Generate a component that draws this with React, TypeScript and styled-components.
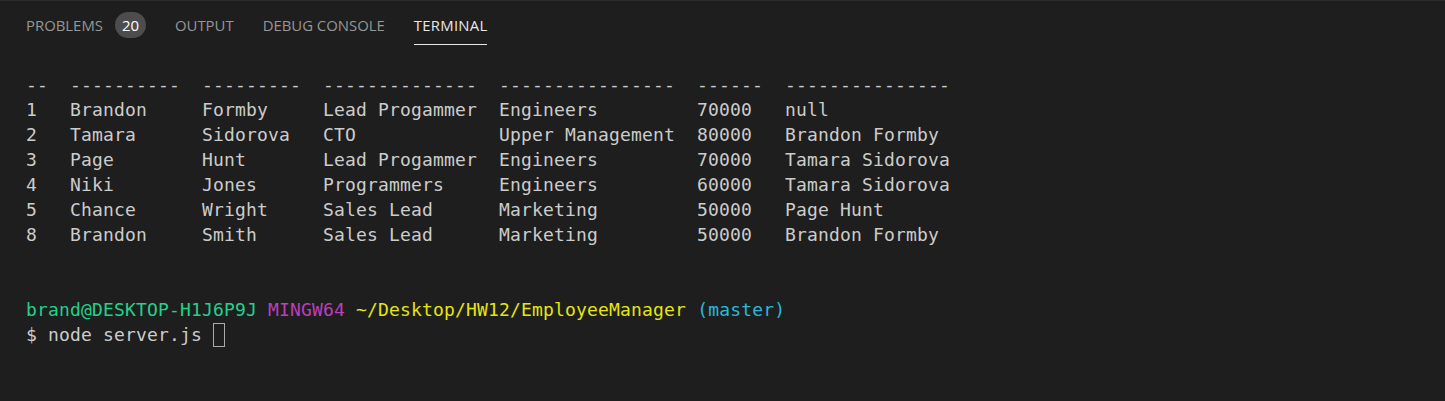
import React from "react";
import styled, { createGlobalStyle } from "styled-components";

const GlobalStyle = createGlobalStyle`
  html, body { margin: 0; padding: 0; background: #1e1e1e; }
  #root { width: 1445px; height: 401px; overflow: hidden; }
`;

const Panel = styled.div`
  width: 1445px;
  height: 401px;
  background: #1e1e1e;
  border-top: 1px solid #2b2b2b;
  box-sizing: border-box;
  display: flex;
  flex-direction: column;
`;

const TabBar = styled.div`
  display: flex;
  align-items: flex-start;
  gap: 29px;
  padding: 0 0 0 26px;
  height: 45px;
  box-sizing: border-box;
`;

const Tab = styled.div<{ $active?: boolean }>`
  display: flex;
  align-items: center;
  height: 44px;
  box-sizing: border-box;
  font-family: "Open Sans", "Noto Sans", sans-serif;
  font-size: 14.9px;
  letter-spacing: ${(p) => (p.$active ? "0.25px" : "0")};
  color: ${(p) => (p.$active ? "#e7e7e7" : "#969696")};
  border-bottom: 1px solid ${(p) => (p.$active ? "#e7e7e7" : "transparent")};
  padding-top: 5px;
`;

const Badge = styled.span`
  display: inline-flex;
  align-items: center;
  justify-content: center;
  margin-left: 12px;
  width: 31px;
  height: 26px;
  border-radius: 13px;
  background: #4d4d4d;
  color: #ffffff;
  font-size: 15px;
  font-weight: 400;
`;

const Terminal = styled.div`
  padding: 26px 0 0 26px;
  font-family: "DejaVu Sans Mono", "Liberation Mono", monospace;
  font-size: 18px;
  letter-spacing: 0.164px;
  line-height: 25px;
  color: #cccccc;
`;

const Line = styled.div`
  white-space: pre;
  height: 25px;
`;

const Seg = styled.span<{ $c: string }>`
  color: ${(p) => p.$c};
`;

const Cursor = styled.span`
  display: inline-block;
  width: 10px;
  height: 22px;
  border: 1px solid #aaaaaa;
  vertical-align: -6px;
`;

const rows = [
  "--  ----------  ---------  --------------  ----------------  ------  ---------------",
  "1   Brandon     Formby     Lead Progammer  Engineers         70000   null",
  "2   Tamara      Sidorova   CTO             Upper Management  80000   Brandon Formby",
  "3   Page        Hunt       Lead Progammer  Engineers         70000   Tamara Sidorova",
  "4   Niki        Jones      Programmers     Engineers         60000   Tamara Sidorova",
  "5   Chance      Wright     Sales Lead      Marketing         50000   Page Hunt",
  "8   Brandon     Smith      Sales Lead      Marketing         50000   Brandon Formby",
  "",
  "",
];

export default function App() {
  return (
    <>
      <GlobalStyle />
      <Panel>
        <TabBar>
          <Tab>
            PROBLEMS
            <Badge>20</Badge>
          </Tab>
          <Tab>OUTPUT</Tab>
          <Tab>DEBUG CONSOLE</Tab>
          <Tab $active>TERMINAL</Tab>
        </TabBar>
        <Terminal>
          {rows.map((r, i) => (
            <Line key={i}>{r}</Line>
          ))}
          <Line>
            <Seg $c="#23d18b">brand@DESKTOP-H1J6P9J</Seg>{" "}
            <Seg $c="#bc3fbc">MINGW64</Seg>{" "}
            <Seg $c="#e5e510">~/Desktop/HW12/EmployeeManager</Seg>{" "}
            <Seg $c="#29b8db">(master)</Seg>
          </Line>
          <Line>
            $ node server.js <Cursor />
          </Line>
        </Terminal>
      </Panel>
    </>
  );
}
